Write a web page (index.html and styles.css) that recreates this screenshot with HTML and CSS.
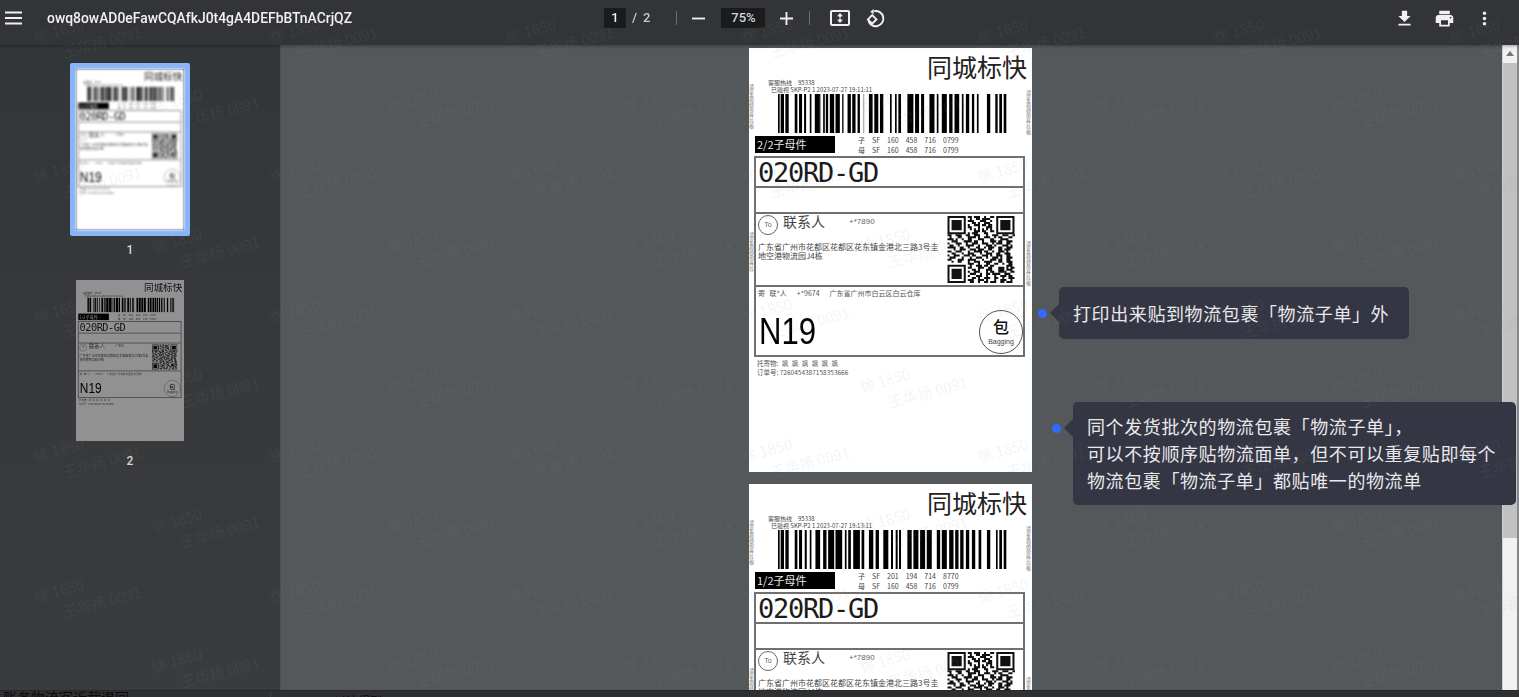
FILE: index.html
```html
<!DOCTYPE html>
<html lang="zh-CN">
<head>
<meta charset="utf-8">
<title>owq8owAD0eFawCQAfkJ0t4gA4DEFbBTnACrjQZ</title>
<link rel="stylesheet" href="styles.css">
</head>
<body>
<svg class="defs" width="0" height="0" aria-hidden="true">
  <symbol id="bars1" viewBox="0 0 685 117" preserveAspectRatio="none">
    <path d="M0 0h5v117h-5zM8 0h10v117h-10zM22 0h10v117h-10zM50 0h8v117h-8zM63 0h9v117h-9zM78 0h6v117h-6zM95 0h5v117h-5zM110 0h16v117h-16zM135 0h5v117h-5zM143 0h7v117h-7zM155 0h13v117h-13zM172 0h13v117h-13zM192 0h4v117h-4zM208 0h10v117h-10zM222 0h10v117h-10zM238 0h7v117h-7zM272 0h11v117h-11zM288 0h12v117h-12zM305 0h10v117h-10zM335 0h5v117h-5zM350 0h5v117h-5zM360 0h8v117h-8zM387 0h18v117h-18zM410 0h12v117h-12zM428 0h9v117h-9zM453 0h15v117h-15zM475 0h5v117h-5zM490 0h15v117h-15zM512 0h10v117h-10zM528 0h14v117h-14zM550 0h5v117h-5zM562 0h10v117h-10zM580 0h7v117h-7zM595 0h5v117h-5zM625 0h10v117h-10zM650 0h7v117h-7zM662 0h8v117h-8zM675 0h8v117h-8z"/>
    <path fill="#999" d="M255 0h3v117h-3zM125 0h4v117h-4z"/>
  </symbol>
  <symbol id="bars2" viewBox="0 0 685 117" preserveAspectRatio="none">
    <path d="M0 0h5v117h-5zM8 0h10v117h-10zM22 0h10v117h-10zM50 0h8v117h-8zM63 0h9v117h-9zM80 0h6v117h-6zM95 0h5v117h-5zM112 0h14v117h-14zM135 0h10v117h-10zM150 0h18v117h-18zM172 0h20v117h-20zM200 0h5v117h-5zM210 0h8v117h-8zM225 0h20v117h-20zM250 0h8v117h-8zM272 0h13v117h-13zM292 0h10v117h-10zM315 0h15v117h-15zM338 0h6v117h-6zM352 0h6v117h-6zM362 0h6v117h-6zM387 0h13v117h-13zM405 0h15v117h-15zM425 0h15v117h-15zM445 0h15v117h-15zM475 0h10v117h-10zM490 0h15v117h-15zM512 0h13v117h-13zM530 0h10v117h-10zM545 0h10v117h-10zM562 0h10v117h-10zM580 0h10v117h-10zM600 0h8v117h-8zM625 0h10v117h-10zM652 0h5v117h-5zM662 0h8v117h-8zM675 0h8v117h-8z"/>
  </symbol>
  <symbol id="qr" viewBox="0 0 33 33">
    <path fill="none" stroke="#111" d="M8.500 .5h-8v8h8zM32.500 .5h-8v8h8zM8.500 24.500h-8v8h8z"/>
    <path fill="#111" d="M2 2h5v5h-5zM26 2h5v5h-5zM2 26h5v5h-5zM25 25h3v3h-3z"/>
    <path fill="none" stroke="#111" stroke-width="1" d="M10 .5h2m1 0h3m2 0h1m2 0h2M11 1.500h1m2 0h2m1 0h4M10 2.500h3m3 0h3m2 0h1M12 3.500h2m1 0h1m2 0h3M10 4.500h1m2 0h3m1 0h2m1 0h2M10 5.500h2m3 0h1m3 0h3M11 6.500h1m1 0h1m1 0h1m1 0h1m1 0h1m1 0h1M13 7.500h3m1 0h2m2 0h2M10 8.500h1m1 0h3m3 0h2M0 9.500h2m2 0h3m2 0h2m2 0h3m3 0h1m2 0h3m2 0h3m2 0h3M1 10.500h1m3 0h2m3 0h4m1 0h1m2 0h3m2 0h1m1 0h2m3 0h2M0 11.500h3m1 0h1m2 0h1m2 0h2m3 0h3m3 0h2m3 0h4M2 12.500h3m3 0h4m1 0h2m2 0h1m3 0h3m1 0h2m2 0h3M0 13.500h1m3 0h3m2 0h1m2 0h3m2 0h3m2 0h1m1 0h3m2 0h2M1 14.500h2m2 0h1m3 0h4m2 0h1m3 0h3m1 0h1m3 0h3m1 0h1M0 15.500h4m2 0h2m2 0h1m3 0h2m2 0h1m1 0h3m2 0h2m2 0h3M3 16.500h1m2 0h3m2 0h3m1 0h3m2 0h2m3 0h2m1 0h3M0 17.500h2m2 0h3m3 0h1m2 0h4m1 0h2m2 0h1m2 0h3m1 0h1M2 18.500h2m3 0h1m2 0h3m3 0h1m2 0h3m2 0h2m2 0h3M0 19.500h1m2 0h3m2 0h3m1 0h2m3 0h3m1 0h1m2 0h3m2 0h2M1 20.500h3m3 0h1m3 0h1m2 0h3m2 0h1m2 0h3m1 0h1m2 0h3M0 21.500h2m3 0h3m2 0h4m3 0h1m3 0h3m1 0h2m2 0h2M2 22.500h1m2 0h2m3 0h1m2 0h3m2 0h4m3 0h2m2 0h3M10 23.500h3m2 0h1m3 0h2m2 0h2m2 0h1m2 0h2M11 24.500h1m2 0h3m1 0h2m1 0h2M29 24.500h3M10 25.500h2m3 0h3m2 0h2M29 25.500h1m1 0h2M12 26.500h2m1 0h1m3 0h3m7 0h3M10 27.500h1m2 0h3m3 0h1m1 0h2m5 0h1m2 0h2M11 28.500h3m2 0h1m2 0h2m1 0h4m2 0h3M10 29.500h1m3 0h3m2 0h1m3 0h1m2 0h3m1 0h2M12 30.500h2m1 0h1m2 0h3m2 0h2m2 0h1m2 0h3M10 31.500h3m2 0h3m1 0h1m3 0h1m2 0h3m2 0h1M11 32.500h2m2 0h1m2 0h2m1 0h3m2 0h2m1 0h3"/>
  </symbol>
</svg>

<div class="app">
  <header class="toolbar">
    <div class="tb-left">
      <svg class="menu-icon" viewBox="0 0 18 14"><path d="M0 0h18v2.200H0zM0 5.900h18v2.200H0zM0 11.800h18V14H0z"/></svg>
      <span class="doc-title">owq8owAD0eFawCQAfkJ0t4gA4DEFbBTnACrjQZ</span>
    </div>
    <div class="tb-center">
      <span class="field page-field">1</span>
      <span class="page-total"><span class="slash">/</span><span>2</span></span>
      <span class="divider first-divider"></span>
      <svg class="zoom-icon minus" viewBox="0 0 14 14"><path d="M0 6h14v2H0z"/></svg>
      <span class="field zoom-field">75%</span>
      <svg class="zoom-icon plus" viewBox="0 0 14 14"><path d="M0 6h6V0h2v6h6v2H8v6H6V8H0z"/></svg>
      <span class="divider second-divider"></span>
      <svg class="fit-icon" viewBox="0 0 20 16"><path fill-rule="evenodd" d="M2 0h16a2 2 0 0 1 2 2v12a2 2 0 0 1-2 2H2a2 2 0 0 1-2-2V2a2 2 0 0 1 2-2zm0 2v12h16V2z"/><path d="M10 3l3 3.200h-2v1.300H9V6.200H7zM9 8.500h2v1.300h2L10 13 7 9.800h2z"/></svg>
      <svg class="rotate-icon" viewBox="0 0 20 20"><path fill="none" stroke="#f1f1f1" stroke-width="2" d="M8.500 2.300a8 8 0 1 1-6 9.700"/><path d="M8 0v5.500L4.500 2.800z"/><path fill="none" stroke="#f1f1f1" stroke-width="2" d="M6.500 6.500L2 11l4.500 4.500L11 11z"/></svg>
    </div>
    <div class="tb-right">
      <svg class="action-icon" viewBox="0 0 24 24"><path d="M19 9h-4V3H9v6H5l7 7 7-7zM5 18v2h14v-2H5z"/></svg>
      <svg class="action-icon" viewBox="0 0 24 24"><path d="M19 8H5c-1.660 0-3 1.340-3 3v6h4v4h12v-4h4v-6c0-1.660-1.340-3-3-3zm-3 11H8v-5h8v5zm3-7c-.55 0-1-.45-1-1s.45-1 1-1 1 .45 1 1-.45 1-1 1zm-1-9H6v4h12V3z"/></svg>
      <svg class="action-icon" viewBox="0 0 24 24"><path d="M12 8c1.100 0 2-.9 2-2s-.9-2-2-2-2 .9-2 2 .9 2 2 2zm0 2c-1.100 0-2 .9-2 2s.9 2 2 2 2-.9 2-2-.9-2-2-2zm0 6c-1.100 0-2 .9-2 2s.9 2 2 2 2-.9 2-2-.9-2-2-2z"/></svg>
    </div>
  </header>

  <div class="workspace">
    <aside class="sidebar">
      <div class="thumb-item">
        <div class="thumb thumb-selected">
          <div class="thumb-page">
            <article class="label label-thumb">
              <div class="brand">同城标快</div>
              <div class="meta"><div>客服热线　95338</div><div class="meta-indent">已验视 SKP-P2 1 2023-07-27 19:11:11</div></div>
              <svg class="barcode"><use href="#bars1"/></svg>
              <div class="tag-row"><span class="tag">2/2子母件</span><div class="track"><div>子　SF　160　458　716　0799</div><div>母　SF　160　458　716　0799</div></div></div>
              <div class="box">
                <div class="row route">020RD-GD</div>
                <div class="row blank"></div>
                <div class="row contact">
                  <div class="contact-info">
                    <div class="contact-head"><span class="to-mark">To</span><span class="contact-name">联系人</span><span class="contact-phone">+*7890</span></div>
                    <div class="address">广东省广州市花都区花都区花东镇金港北三路3号圭<br>地空港物流园J4栋</div>
                  </div>
                  <svg class="qr"><use href="#qr"/></svg>
                </div>
                <div class="row sender">
                  <div class="sender-line"><span class="sender-name">寄 联*人</span><span>+*9674</span><span>广东省广州市白云区白云仓库</span></div>
                  <div class="sort"><span class="sort-code">N19</span><span class="bag"><span class="bag-char">包</span><span class="bag-text">Bagging</span></span></div>
                </div>
              </div>
              <div class="foot"><div class="foot-goods">托寄物: 飒 飒 飒 飒 飒 飒</div><div>订单号: 7260454387158353666</div></div>
            </article>
          </div>
        </div>
        <span class="thumb-num">1</span>
      </div>
      <div class="thumb-item">
        <div class="thumb">
          <div class="thumb-page thumb-dim">
            <article class="label label-thumb">
              <div class="brand">同城标快</div>
              <div class="meta"><div>客服热线　95338</div><div class="meta-indent">已验视 SKP-P2 1 2023-07-27 19:13:11</div></div>
              <svg class="barcode"><use href="#bars2"/></svg>
              <div class="tag-row"><span class="tag">1/2子母件</span><div class="track"><div>子　SF　201　194　714　8770</div><div>母　SF　160　458　716　0799</div></div></div>
              <div class="box">
                <div class="row route">020RD-GD</div>
                <div class="row blank"></div>
                <div class="row contact">
                  <div class="contact-info">
                    <div class="contact-head"><span class="to-mark">To</span><span class="contact-name">联系人</span><span class="contact-phone">+*7890</span></div>
                    <div class="address">广东省广州市花都区花都区花东镇金港北三路3号圭<br>地空港物流园J4栋</div>
                  </div>
                  <svg class="qr"><use href="#qr"/></svg>
                </div>
                <div class="row sender">
                  <div class="sender-line"><span class="sender-name">寄 联*人</span><span>+*9674</span><span>广东省广州市白云区白云仓库</span></div>
                  <div class="sort"><span class="sort-code">N19</span><span class="bag"><span class="bag-char">包</span><span class="bag-text">Bagging</span></span></div>
                </div>
              </div>
              <div class="foot"><div class="foot-goods">托寄物: 飒 飒 飒 飒 飒 飒</div><div>订单号: 7260454387158353666</div></div>
            </article>
          </div>
        </div>
        <span class="thumb-num">2</span>
      </div>
    </aside>

    <main class="viewer">
      <article class="label">
        <span class="side side-l1">请妥善保管寄件存根</span>
        <span class="side side-l2">请妥善保管寄件存</span>
        <span class="side side-r1">请妥善保管寄件存根</span>
        <span class="side side-r2">请妥善保管寄件存根</span>
        <div class="brand">同城标快</div>
        <div class="meta"><div>客服热线　95338</div><div class="meta-indent">已验视 SKP-P2 1 2023-07-27 19:11:11</div></div>
        <svg class="barcode"><use href="#bars1"/></svg>
        <div class="tag-row"><span class="tag">2/2子母件</span><div class="track"><div>子　SF　160　458　716　0799</div><div>母　SF　160　458　716　0799</div></div></div>
        <div class="box">
          <div class="row route">020RD-GD</div>
          <div class="row blank"></div>
          <div class="row contact">
            <div class="contact-info">
              <div class="contact-head"><span class="to-mark">To</span><span class="contact-name">联系人</span><span class="contact-phone">+*7890</span></div>
              <div class="address">广东省广州市花都区花都区花东镇金港北三路3号圭<br>地空港物流园J4栋</div>
            </div>
            <svg class="qr"><use href="#qr"/></svg>
          </div>
          <div class="row sender">
            <div class="sender-line"><span class="sender-name">寄 联*人</span><span>+*9674</span><span>广东省广州市白云区白云仓库</span></div>
            <div class="sort"><span class="sort-code">N19</span><span class="bag"><span class="bag-char">包</span><span class="bag-text">Bagging</span></span></div>
          </div>
        </div>
        <div class="foot"><div class="foot-goods">托寄物: 飒 飒 飒 飒 飒 飒</div><div>订单号: 7260454387158353666</div></div>
      </article>
      <article class="label">
        <span class="side side-l1">请妥善保管寄件存根</span>
        <span class="side side-l2">请妥善保管寄件存</span>
        <span class="side side-r1">请妥善保管寄件存根</span>
        <span class="side side-r2">请妥善保管寄件存根</span>
        <div class="brand">同城标快</div>
        <div class="meta"><div>客服热线　95338</div><div class="meta-indent">已验视 SKP-P2 1 2023-07-27 19:13:11</div></div>
        <svg class="barcode"><use href="#bars2"/></svg>
        <div class="tag-row"><span class="tag">1/2子母件</span><div class="track"><div>子　SF　201　194　714　8770</div><div>母　SF　160　458　716　0799</div></div></div>
        <div class="box">
          <div class="row route">020RD-GD</div>
          <div class="row blank"></div>
          <div class="row contact">
            <div class="contact-info">
              <div class="contact-head"><span class="to-mark">To</span><span class="contact-name">联系人</span><span class="contact-phone">+*7890</span></div>
              <div class="address">广东省广州市花都区花都区花东镇金港北三路3号圭<br>地空港物流园J4栋</div>
            </div>
            <svg class="qr"><use href="#qr"/></svg>
          </div>
        </div>
      </article>
    </main>

    <div class="scrollbar">
      <div class="scroll-arrow"></div>
      <div class="scroll-thumb"></div>
    </div>
  </div>

  <footer class="under-strip">
    <span class="under-a">账务物流客诉截退回</span>
    <span class="under-b">以往规则</span>
  </footer>

  <div class="callout callout-one">打印出来贴到物流包裹「物流子单」外</div>
  <div class="callout callout-two">同个发货批次的物流包裹「物流子单」，<br>可以不按顺序贴物流面单，但不可以重复贴即每个<br>物流包裹「物流子单」都贴唯一的物流单</div>

  <div class="watermarks" aria-hidden="true">
    <div class="wm-row"><div class="wm"><span>徐 1850</span><span class="wm-b">王华扬 0091</span></div><div class="wm"><span>徐 1850</span><span class="wm-b">王华扬 0091</span></div><div class="wm"><span>徐 1850</span><span class="wm-b">王华扬 0091</span></div><div class="wm"><span>徐 1850</span><span class="wm-b">王华扬 0091</span></div><div class="wm"><span>徐 1850</span><span class="wm-b">王华扬 0091</span></div><div class="wm"><span>徐 1850</span><span class="wm-b">王华扬 0091</span></div><div class="wm"><span>徐 1850</span><span class="wm-b">王华扬 0091</span></div></div>
    <div class="wm-row wm-shift"><div class="wm"><span>徐 1850</span><span class="wm-b">王华扬 0091</span></div><div class="wm"><span>徐 1850</span><span class="wm-b">王华扬 0091</span></div><div class="wm"><span>徐 1850</span><span class="wm-b">王华扬 0091</span></div><div class="wm"><span>徐 1850</span><span class="wm-b">王华扬 0091</span></div><div class="wm"><span>徐 1850</span><span class="wm-b">王华扬 0091</span></div><div class="wm"><span>徐 1850</span><span class="wm-b">王华扬 0091</span></div></div>
    <div class="wm-row"><div class="wm"><span>徐 1850</span><span class="wm-b">王华扬 0091</span></div><div class="wm"><span>徐 1850</span><span class="wm-b">王华扬 0091</span></div><div class="wm"><span>徐 1850</span><span class="wm-b">王华扬 0091</span></div><div class="wm"><span>徐 1850</span><span class="wm-b">王华扬 0091</span></div><div class="wm"><span>徐 1850</span><span class="wm-b">王华扬 0091</span></div><div class="wm"><span>徐 1850</span><span class="wm-b">王华扬 0091</span></div><div class="wm"><span>徐 1850</span><span class="wm-b">王华扬 0091</span></div></div>
    <div class="wm-row wm-shift"><div class="wm"><span>徐 1850</span><span class="wm-b">王华扬 0091</span></div><div class="wm"><span>徐 1850</span><span class="wm-b">王华扬 0091</span></div><div class="wm"><span>徐 1850</span><span class="wm-b">王华扬 0091</span></div><div class="wm"><span>徐 1850</span><span class="wm-b">王华扬 0091</span></div><div class="wm"><span>徐 1850</span><span class="wm-b">王华扬 0091</span></div><div class="wm"><span>徐 1850</span><span class="wm-b">王华扬 0091</span></div></div>
    <div class="wm-row"><div class="wm"><span>徐 1850</span><span class="wm-b">王华扬 0091</span></div><div class="wm"><span>徐 1850</span><span class="wm-b">王华扬 0091</span></div><div class="wm"><span>徐 1850</span><span class="wm-b">王华扬 0091</span></div><div class="wm"><span>徐 1850</span><span class="wm-b">王华扬 0091</span></div><div class="wm"><span>徐 1850</span><span class="wm-b">王华扬 0091</span></div><div class="wm"><span>徐 1850</span><span class="wm-b">王华扬 0091</span></div><div class="wm"><span>徐 1850</span><span class="wm-b">王华扬 0091</span></div></div>
    <div class="wm-row wm-shift"><div class="wm"><span>徐 1850</span><span class="wm-b">王华扬 0091</span></div><div class="wm"><span>徐 1850</span><span class="wm-b">王华扬 0091</span></div><div class="wm"><span>徐 1850</span><span class="wm-b">王华扬 0091</span></div><div class="wm"><span>徐 1850</span><span class="wm-b">王华扬 0091</span></div><div class="wm"><span>徐 1850</span><span class="wm-b">王华扬 0091</span></div><div class="wm"><span>徐 1850</span><span class="wm-b">王华扬 0091</span></div></div>
    <div class="wm-row"><div class="wm"><span>徐 1850</span><span class="wm-b">王华扬 0091</span></div><div class="wm"><span>徐 1850</span><span class="wm-b">王华扬 0091</span></div><div class="wm"><span>徐 1850</span><span class="wm-b">王华扬 0091</span></div><div class="wm"><span>徐 1850</span><span class="wm-b">王华扬 0091</span></div><div class="wm"><span>徐 1850</span><span class="wm-b">王华扬 0091</span></div><div class="wm"><span>徐 1850</span><span class="wm-b">王华扬 0091</span></div><div class="wm"><span>徐 1850</span><span class="wm-b">王华扬 0091</span></div></div>
    <div class="wm-row wm-shift"><div class="wm"><span>徐 1850</span><span class="wm-b">王华扬 0091</span></div><div class="wm"><span>徐 1850</span><span class="wm-b">王华扬 0091</span></div><div class="wm"><span>徐 1850</span><span class="wm-b">王华扬 0091</span></div><div class="wm"><span>徐 1850</span><span class="wm-b">王华扬 0091</span></div><div class="wm"><span>徐 1850</span><span class="wm-b">王华扬 0091</span></div><div class="wm"><span>徐 1850</span><span class="wm-b">王华扬 0091</span></div></div>
    <div class="wm-row"><div class="wm"><span>徐 1850</span><span class="wm-b">王华扬 0091</span></div><div class="wm"><span>徐 1850</span><span class="wm-b">王华扬 0091</span></div><div class="wm"><span>徐 1850</span><span class="wm-b">王华扬 0091</span></div><div class="wm"><span>徐 1850</span><span class="wm-b">王华扬 0091</span></div><div class="wm"><span>徐 1850</span><span class="wm-b">王华扬 0091</span></div><div class="wm"><span>徐 1850</span><span class="wm-b">王华扬 0091</span></div><div class="wm"><span>徐 1850</span><span class="wm-b">王华扬 0091</span></div></div>
    <div class="wm-row wm-shift"><div class="wm"><span>徐 1850</span><span class="wm-b">王华扬 0091</span></div><div class="wm"><span>徐 1850</span><span class="wm-b">王华扬 0091</span></div><div class="wm"><span>徐 1850</span><span class="wm-b">王华扬 0091</span></div><div class="wm"><span>徐 1850</span><span class="wm-b">王华扬 0091</span></div><div class="wm"><span>徐 1850</span><span class="wm-b">王华扬 0091</span></div><div class="wm"><span>徐 1850</span><span class="wm-b">王华扬 0091</span></div></div>
  </div>
</div>
</body>
</html>
```
FILE: styles.css
```css
* { box-sizing: border-box; }
html, body { margin: 0; height: 100%; overflow: hidden; background: #2f3032; }
.defs { position: absolute; }
.app {
  position: relative;
  width: 1519px;
  height: 697px;
  overflow: hidden;
  display: flex;
  flex-direction: column;
  font-family: "Noto Sans CJK SC", "Noto Sans", sans-serif;
  filter: blur(0.6px);
}

/* toolbar */
.toolbar {
  flex: 0 0 45px;
  display: flex;
  align-items: center;
  background: #323437;
  color: #f1f1f1;
  box-shadow: 0 1px 3px rgba(0, 0, 0, .35);
  position: relative;
  z-index: 2;
  padding-bottom: 9px;
}
.toolbar svg { fill: #f1f1f1; display: block; }
.tb-left { flex: 0 0 604px; display: flex; align-items: center; padding-left: 5px; }
.menu-icon { width: 17px; height: 14px; }
.doc-title {
  margin-left: 25px;
  font: 500 13.900px/20px Roboto, "Noto Sans", sans-serif;
  white-space: nowrap;
}
.tb-center { flex: 1; display: flex; align-items: center; }
.field {
  height: 20px;
  background: #191b1c;
  display: flex;
  align-items: center;
  justify-content: center;
  font: 500 13px/20px Roboto, sans-serif;
}
.page-field { width: 22px; }
.page-total { display: flex; gap: 6px; margin-left: 6px; font: 500 13px/20px Roboto, sans-serif; color: #c9cacb; }
.divider { width: 1px; height: 14px; background: #6c6e71; }
.first-divider { margin-left: 26px; }
.minus { margin-left: 15px; }
.zoom-icon { width: 13px; height: 13px; }
.zoom-field { width: 44px; margin-left: 16px; color: #d5d5d5; }
.plus { margin-left: 15px; }
.second-divider { margin-left: 16px; }
.fit-icon { width: 20px; height: 16px; margin-left: 20px; }
.rotate-icon { width: 19px; height: 19px; margin-left: 16px; }
.tb-right { display: flex; align-items: center; gap: 19px; padding-right: 24.500px; }
.action-icon { width: 21px; height: 21px; }

/* workspace */
.workspace { flex: 1; min-height: 0; display: flex; }
.sidebar {
  flex: 0 0 280px;
  background: linear-gradient(#333639, #3a3b3d);
  padding: 18px 20px 0 0;
  display: flex;
  flex-direction: column;
  align-items: center;
  gap: 18px;
}
.thumb-item { display: flex; flex-direction: column; align-items: center; gap: 8px; }
.thumb { border: 6px solid transparent; width: 120px; height: 173px; }
.thumb-selected { border-color: #8ab4f8; border-radius: 2px; }
.thumb-page { width: 108px; height: 161px; overflow: hidden; background: #fff; filter: blur(.8px); }
.thumb-dim { filter: blur(.6px) brightness(.57); }
.thumb-num { font: 500 12px/12px Roboto, sans-serif; color: #d8d8d8; }
.label-thumb { transform: scale(.382); transform-origin: 0 0; }

.viewer {
  flex: 1;
  min-width: 0;
  background: #54585b;
  box-shadow: inset 1px 0 0 #4b4e51;
  padding: 3px 1px 0 0;
  overflow: hidden;
  display: flex;
  flex-direction: column;
  align-items: center;
  gap: 12px;
}
.scrollbar {
  flex: 0 0 17px;
  background: #f1f1f1;
  border-right: 2px solid #85878a;
  border-left: 1px solid #cfd0d0;
  display: flex;
  flex-direction: column;
}
.scroll-arrow { height: 18px; position: relative; }
.scroll-arrow::after {
  content: "";
  position: absolute;
  left: 3px;
  top: 6px;
  border: 4px solid transparent;
  border-top: 0;
  border-bottom: 5px solid #777;
}
.scroll-thumb { height: 475px; background: #c1c1c1; }

/* shipping label */
.label {
  flex: 0 0 424px;
  width: 283px;
  height: 424px;
  background: #fff;
  color: #111;
  position: relative;
}
.brand { height: 31px; padding: 6px 5px 0 0; text-align: right; font-size: 25px; line-height: 25px; color: #222; }
.meta { padding-left: 19px; font-size: 6px; line-height: 7px; color: #444; white-space: nowrap; }
.meta-indent { padding-left: 3px; }
.barcode { display: block; width: 229px; height: 39px; margin: 1px 0 0 29px; fill: #000; }
.tag-row { display: flex; height: 19px; margin-top: 2px; padding-left: 6px; }
.tag {
  width: 80px;
  height: 17px;
  margin-top: 1px;
  background: #000;
  color: #e8e8e8;
  font-size: 11px;
  line-height: 17px;
  padding-left: 2px;
}
.track { margin-left: 23px; font: 7px/10px "Noto Sans CJK SC", sans-serif; color: #444; white-space: nowrap; }
.box { margin: 1.500px 0 0 5px; width: 271px; border: 2px solid #707070; }
.row { border-bottom: 2px solid #707070; }
.row:last-child { border-bottom: 0; }
.route {
  height: 30px;
  padding-left: 2px;
  font: 27px/29px "DejaVu Sans Mono", "Liberation Mono", monospace;
  letter-spacing: -1.250px;
  color: #1a1a1a;
}
.blank { height: 26px; }
.contact { height: 73px; display: flex; justify-content: space-between; padding: 1px 8px 0 2px; }
.contact-head { display: flex; align-items: flex-start; }
.to-mark {
  width: 20px;
  height: 20px;
  border: 1.200px solid #666;
  border-radius: 50%;
  display: flex;
  align-items: center;
  justify-content: center;
  font: 7px/1 "Liberation Sans", sans-serif;
  color: #666;
}
.contact-name { margin: -1px 0 0 5px; font-size: 14px; line-height: 14px; color: #444; }
.contact-phone { margin: 2px 0 0 24px; font: 8px/9px "Liberation Sans", sans-serif; color: #666; }
.address { margin-top: 7px; font-size: 8px; line-height: 9px; color: #444; white-space: nowrap; }
.qr { flex: 0 0 68px; width: 68px; height: 67px; margin-top: 1.500px; }
.sender { height: 68px; padding: 2px 0 0 2px; }
.sender-line { display: flex; gap: 10px; font-size: 7px; line-height: 9px; color: #555; white-space: nowrap; }
.sender-name { word-spacing: 3px; }
.sort { display: flex; justify-content: space-between; align-items: center; height: 44px; margin-top: 12px; }
.sort-code {
  margin-left: 1px;
  font: 37px/44px "Liberation Sans", sans-serif;
  color: #000;
  transform: scaleX(.84);
  transform-origin: 0 50%;
}
.bag {
  flex: 0 0 44px;
  height: 44px;
  border: 1.300px solid #555;
  border-radius: 50%;
  display: flex;
  flex-direction: column;
  align-items: center;
  padding-top: 6px;
}
.bag-char { font-size: 16px; font-weight: 500; line-height: 18px; color: #111; }
.bag-text { font: 7px/9px "Liberation Sans", sans-serif; color: #444; margin-top: 2px; }
.foot { margin: 2.500px 0 0 8px; font-size: 6.500px; line-height: 9px; color: #555; white-space: nowrap; }
.foot-goods { word-spacing: 2px; }
.side {
  position: absolute;
  writing-mode: vertical-rl;
  font-size: 5px;
  line-height: 5px;
  color: #777;
  white-space: nowrap;
}
.side-l1 { left: 0; top: 36px; }
.side-l2 { left: 0; top: 184px; }
.side-r1 { right: 1px; top: 42px; }
.side-r2 { right: 1px; top: 193px; }

/* strip behind the dim layer */
.under-strip {
  flex: 0 0 7px;
  background: #2f3032;
  color: #0b0b0b;
  font-size: 14px;
  line-height: 14px;
  overflow: hidden;
  display: flex;
  border-top: 1px solid #27282a;
}
.under-a { margin: -1px 0 0 3px; width: 268px; border-right: 1px solid #3d3e40; white-space: nowrap; }
.under-b { margin: 3px 0 0 63px; font-size: 12px; white-space: nowrap; }

/* guide callouts */
.callout {
  position: absolute;
  background: #343643;
  color: #e9e9ec;
  border-radius: 5px;
  font-size: 18px;
  letter-spacing: .6px;
  white-space: nowrap;
  padding-left: 14px;
  z-index: 3;
}
.callout::before {
  content: "";
  position: absolute;
  left: -9px;
  border: 9px solid transparent;
  border-left: 0;
  border-right-color: #343643;
}
.callout::after {
  content: "";
  position: absolute;
  left: -21px;
  width: 9px;
  height: 9px;
  border-radius: 50%;
  background: #2f6bff;
}
.callout-one { left: 1059px; top: 287px; width: 350px; height: 52px; line-height: 52px; }
.callout-one::before { top: 17px; }
.callout-one::after { top: 21.500px; }
.callout-two { left: 1073px; top: 402px; width: 443px; height: 103px; padding-top: 11px; line-height: 27px; }
.callout-two::before { top: 17px; }
.callout-two::after { top: 21.500px; }

/* watermark layer */
.watermarks {
  position: absolute;
  left: 0;
  top: -5px;
  z-index: 4;
  pointer-events: none;
  font: 15px/20px "Noto Sans CJK SC", sans-serif;
  color: rgba(150, 150, 150, .1);
}
.wm-row { display: flex; height: 70px; gap: 118px; white-space: nowrap; }
.wm-shift { padding-left: 118px; }
.wm { flex: 0 0 118px; display: grid; place-items: center; }
.wm span { grid-area: 1 / 1; transform: rotate(-15deg); }
.wm .wm-b { transform: translate(43px, 12px) rotate(-15deg); }
```
